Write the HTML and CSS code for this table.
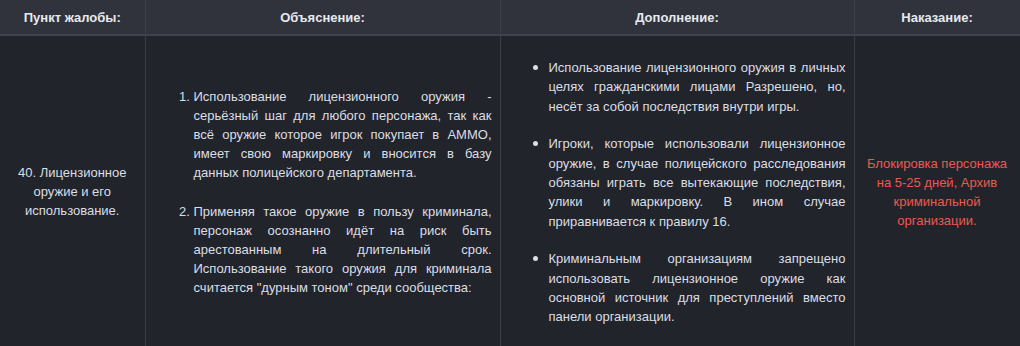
FILE: index.html
```html
<!DOCTYPE html>
<html lang="ru">
<head>
<meta charset="utf-8">
<link rel="stylesheet" href="styles.css">
</head>
<body>
<table class="rules">
  <colgroup>
    <col class="c1"><col class="c2"><col class="c3"><col class="c4">
  </colgroup>
  <thead>
    <tr>
      <th>Пункт жалобы:</th>
      <th>Объяснение:</th>
      <th>Дополнение:</th>
      <th>Наказание:</th>
    </tr>
  </thead>
  <tbody>
    <tr>
      <td class="center">40. Лицензионное оружие и его использование.</td>
      <td class="just">
        <ol class="list ol">
          <li>Использование лицензионного оружия - серьёзный шаг для любого персонажа, так как всё оружие которое игрок покупает в AMMO, имеет свою маркировку и вносится в базу данных полицейского департамента.</li>
          <li>Применяя такое оружие в пользу криминала, персонаж осознанно идёт на риск быть арестованным на длительный срок. Использование такого оружия для криминала считается "дурным тоном" среди сообщества:</li>
        </ol>
      </td>
      <td class="just">
        <ul class="list ul">
          <li>Использование лицензионного оружия в личных целях гражданскими лицами Разрешено, но, несёт за собой последствия внутри игры.</li>
          <li>Игроки, которые использовали лицензионное оружие, в случае полицейского расследования обязаны играть все вытекающие последствия, улики и маркировку. В ином случае приравнивается к правилу 16.</li>
          <li>Криминальным организациям запрещено использовать лицензионное оружие как основной источник для преступлений вместо панели организации.</li>
        </ul>
      </td>
      <td class="center red">Блокировка персонажа на 5-25 дней, Архив криминальной организации.</td>
    </tr>
  </tbody>
</table>
</body>
</html>
```

FILE: styles.css
```css
html, body {
  margin: 0;
  padding: 0;
  background: #22242b;
}
body {
  font-family: "Liberation Sans", Arial, sans-serif;
  font-size: 13px;
  color: #dadee5;
}
.rules {
  width: 1020px;
  border-collapse: collapse;
  table-layout: fixed;
}
.c1 { width: 145px; }
.c2 { width: 355px; }
.c3 { width: 354px; }
.c4 { width: 166px; }
.rules th {
  background: #30333b;
  color: #e6e9ef;
  font-weight: bold;
  height: 35px;
  padding: 0 8px;
  line-height: 19px;
  border-left: 1px solid #3a3e47;
  border-right: 1px solid #3a3e47;
  border-bottom: 2px solid #3e424c;
  text-align: center;
  box-sizing: border-box;
}
.rules th:first-child, .rules td:first-child { border-left: none; }
.rules td {
  padding: 8px;
  line-height: 19px;
  vertical-align: middle;
  border-left: 1px solid #3a3e47;
  border-right: 1px solid #3a3e47;
}
.center { text-align: center; }
.just { text-align: justify; }
.red { color: #ec5a4e; }
.list {
  margin: 13px 0;
  padding-left: 40px;
}
.ol li + li { margin-top: 20px; }
.ul li { line-height: 19.4px; }
.ul li + li { margin-top: 17px; }
.ul li::marker { font-size: 15px; }
```
